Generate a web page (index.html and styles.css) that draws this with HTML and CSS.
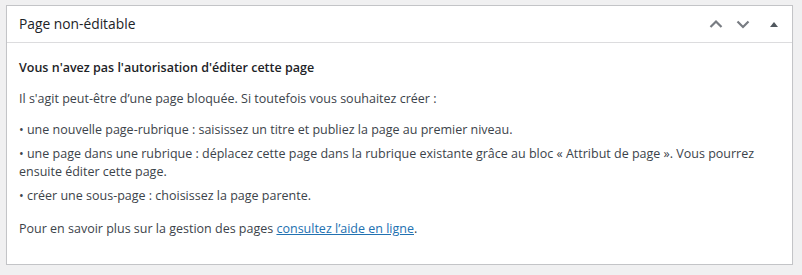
FILE: index.html
```html
<!DOCTYPE html>
<html>
	<head>
		<meta charset="UTF-8">
		<title>Page non-éditable</title>
		<link rel="stylesheet" href="styles.css">
	</head>
	<body>
		<div class="postbox">
			<!--en-tête-->
			<div class="postbox-header">
				<h2 class="hndle">Page non-éditable</h2>
				<div class="handle-actions">
					<button class="handle-btn" type="button" aria-label="Monter">
						<svg width="14" height="14" viewBox="0 0 14 14"><path d="M1.5 10 L7 4.5 L12.5 10" fill="none" stroke="currentColor" stroke-width="2.2"/></svg>
					</button>
					<button class="handle-btn" type="button" aria-label="Descendre">
						<svg width="14" height="14" viewBox="0 0 14 14"><path d="M1.5 4.5 L7 10 L12.5 4.5" fill="none" stroke="currentColor" stroke-width="2.2"/></svg>
					</button>
					<button class="handle-btn toggle" type="button" aria-label="Replier">
						<svg width="10" height="10" viewBox="0 0 10 10"><path d="M1 8 L5 3 L9 8 Z" fill="currentColor"/></svg>
					</button>
				</div>
			</div>
			<!--contenu-->
			<div class="inside">
				<p><strong>Vous n'avez pas l'autorisation d'éditer cette page</strong></p>
				<p>Il s'agit peut-être d’une page bloquée. Si toutefois vous souhaitez créer :</p>
				<ul>
					<li>• une nouvelle page-rubrique : saisissez un titre et publiez la page au premier niveau.</li>
					<li>• une page dans une rubrique : déplacez cette page dans la rubrique existante grâce au bloc « Attribut de page ». Vous pourrez ensuite éditer cette page.</li>
					<li>• créer une sous-page : choisissez la page parente.</li>
				</ul>
				<p>Pour en savoir plus sur la gestion des pages <a href="#">consultez l’aide en ligne</a>.</p>
			</div>
		</div>
	</body>
</html>
```

FILE: styles.css
```css
* {
	margin: 0;
	padding: 0;
	box-sizing: border-box;
}

body {
	background-color: #f0f0f1;
	padding: 5px 10px 0 6px;
	font-family: "Open Sans", "Noto Sans", sans-serif;
	font-size: 12.5px;
	line-height: 18px;
	color: #3c434a;
}

.postbox {
	width: 787px;
	height: 260px;
	background-color: #fff;
	border: 1px solid #c3c4c7;
	box-shadow: 0 1px 1px rgba(0,0,0,0.04);
}

.postbox-header {
	height: 37px;
	display: flex;
	align-items: center;
	justify-content: space-between;
	border-bottom: 1px solid #dcdcde;
}

.hndle {
	font-size: 13.8px;
	font-weight: 400;
	color: #1d2327;
	padding-left: 12px;
	line-height: 1.4;
}

.handle-actions {
	display: flex;
	align-items: center;
}

.handle-btn {
	width: 27px;
	height: 36px;
	border: none;
	background: none;
	color: #787c82;
	display: flex;
	align-items: center;
	justify-content: center;
}

.handle-btn.toggle {
	width: 36px;
	color: #50575e;
}

.inside {
	padding: 3px 12px 12px;
}

.inside p {
	margin: 13px 0;
}

.inside strong {
	font-weight: 600;
	color: #1d2327;
}

ul {
	list-style: none;
	margin: 13px 0 15px;
}

li {
	margin-bottom: 6px;
}

a {
	color: #2271b1;
	text-decoration: underline;
}
```
